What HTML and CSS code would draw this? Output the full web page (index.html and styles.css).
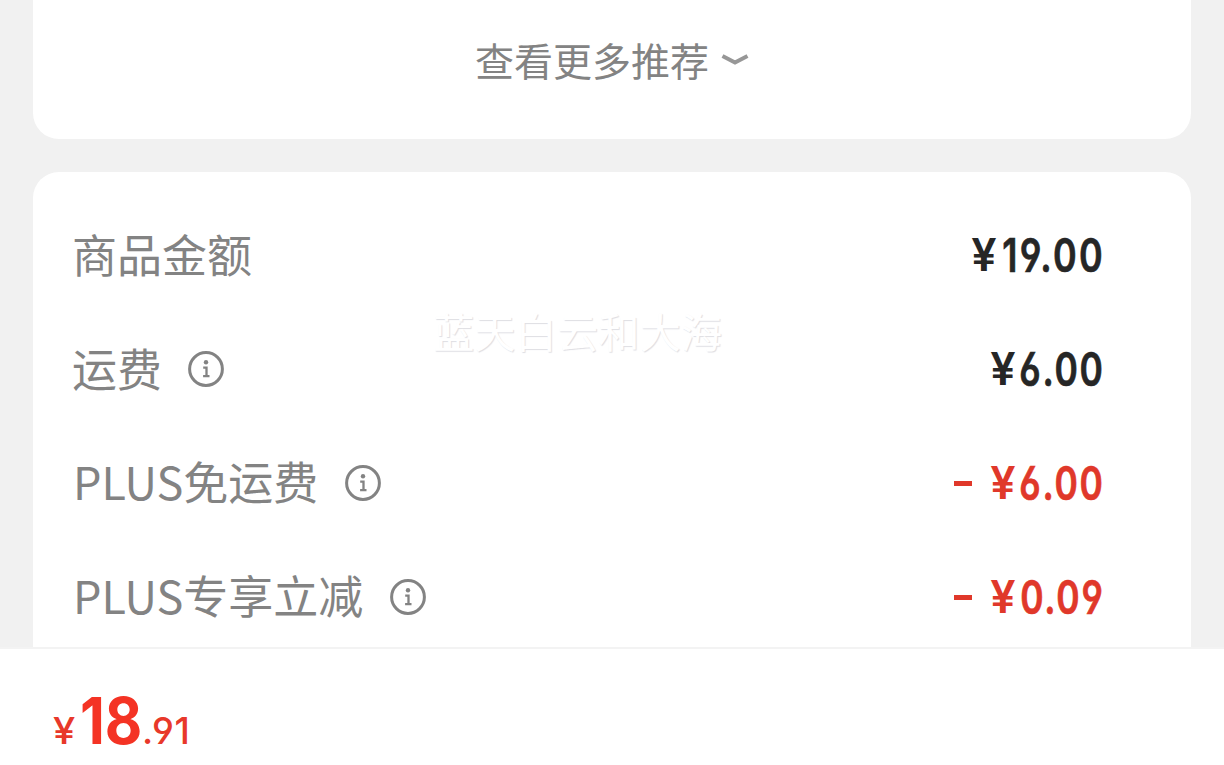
FILE: index.html
```html
<!DOCTYPE html>
<html lang="zh-CN">
<head>
<meta charset="utf-8">
<title>订单金额</title>
<link rel="stylesheet" href="styles.css">
</head>
<body>
<svg class="defs" aria-hidden="true">
  <symbol id="info" viewBox="0 0 38 38">
    <circle cx="19" cy="19" r="16.4" fill="none" stroke="currentColor" stroke-width="3"/>
    <circle cx="19" cy="12.200" r="2.200" fill="currentColor"/>
    <path d="M16.200 17.600h3.300v8.200M16.100 26.200h6.400" fill="none" stroke="currentColor" stroke-width="2.300"/>
  </symbol>
</svg>
<main class="page">
  <section class="card more">
    <span>查看更多推荐</span>
    <svg class="chevron" viewBox="0 0 28 14"><path d="M1.500 3 14 9.500 26.500 3" fill="none" stroke="currentColor" stroke-width="4"/></svg>
  </section>
  <section class="card amounts">
    <div class="row"><span class="label">商品金额</span><span class="price"><span class="sign">¥</span><span class="digits">19.00</span></span></div>
    <div class="row"><span class="label">运费</span><svg class="info"><use href="#info"/></svg><span class="price"><span class="sign">¥</span><span class="digits">6.00</span></span></div>
    <div class="row"><span class="label plus">PLUS免运费</span><svg class="info"><use href="#info"/></svg><span class="price red"><span class="minus"></span><span class="sign">¥</span><span class="digits">6.00</span></span></div>
    <div class="row"><span class="label plus">PLUS专享立减</span><svg class="info"><use href="#info"/></svg><span class="price red"><span class="minus"></span><span class="sign">¥</span><span class="digits">0.09</span></span></div>
    <div class="watermark">蓝天白云和大海</div>
  </section>
</main>
<footer class="total"><span class="yen">¥</span><span class="whole">18</span><span class="cents">.91</span></footer>
</body>
</html>
```
FILE: styles.css
```css
* { box-sizing: border-box; }
body {
  margin: 0;
  height: 765px;
  display: flex;
  flex-direction: column;
  overflow: hidden;
  background: #f1f1f1;
  color: #838383;
  font-family: "Noto Sans CJK SC", sans-serif;
}
.defs { position: absolute; width: 0; height: 0; }
.page {
  height: 647px;
  padding: 0 33px;
  display: flex;
  flex-direction: column;
  gap: 33px;
  overflow: hidden;
}
.card { flex: none; background: #fff; }
.more {
  height: 139px;
  padding-top: 30px;
  display: flex;
  justify-content: center;
  gap: 12px;
  border-radius: 0 0 26px 26px;
  font-size: 39px;
  line-height: 58px;
}
.chevron { width: 28px; height: 14px; margin-top: 23px; color: #979797; }
.amounts {
  position: relative;
  height: 475px;
  padding: 26px 88px 0 39px;
  border-radius: 26px 26px 0 0;
  overflow: hidden;
}
.row { height: 114px; display: flex; align-items: center; }
.label { padding-bottom: 2px; font-size: 45px; line-height: 66px; }
.plus { padding: 0 0 4px 1px; margin-right: 1px; }
.info { width: 38px; height: 38px; margin-left: 25px; }
.price {
  display: flex;
  align-items: center;
  margin-left: auto;
  font-family: Inter, sans-serif;
  font-size: 46px;
  font-weight: 600;
  font-feature-settings: "cv03", "cv04";
  line-height: 56px;
  color: #262626;
}
.sign {
  width: 28px;
  display: flex;
  justify-content: center;
  font-size: 45px;
}
.digits {
  width: 86px;
  display: flex;
  justify-content: flex-end;
  letter-spacing: 2.2px;
  -webkit-text-stroke: .7px currentColor;
  transform: translateX(1.5px) scaleX(.77);
  transform-origin: right;
}
.row:first-child .digits {
  width: 105px;
  letter-spacing: 3px;
  transform: translateX(2px) scaleX(.78);
}
.minus { width: 18px; height: 5px; margin-right: 17px; background: #e0382a; }
.red { color: #e0382a; }
.watermark {
  position: absolute;
  left: 400px;
  top: 127px;
  font-size: 41.3px;
  line-height: 62px;
  color: #fff;
  text-shadow: 1px 1px 1px #dedee3;
}
.total {
  height: 118px;
  padding: 27px 53px 0;
  display: flex;
  align-items: baseline;
  border-top: 2px solid #f3f3f3;
  background: #fff;
  color: #e8382a;
  font-family: Inter, sans-serif;
  line-height: 90px;
}
.yen { width: 27px; font-size: 37px; font-weight: 500; transform: scaleX(1.08); transform-origin: left; }
.whole {
  width: 62px;
  color: #f43324;
  font-size: 64px;
  font-weight: 700;
  transform: scaleX(.9);
  transform-origin: left;
}
.cents { font-size: 37px; font-weight: 500; letter-spacing: .6px; font-feature-settings: "cv03", "cv04"; }
```
